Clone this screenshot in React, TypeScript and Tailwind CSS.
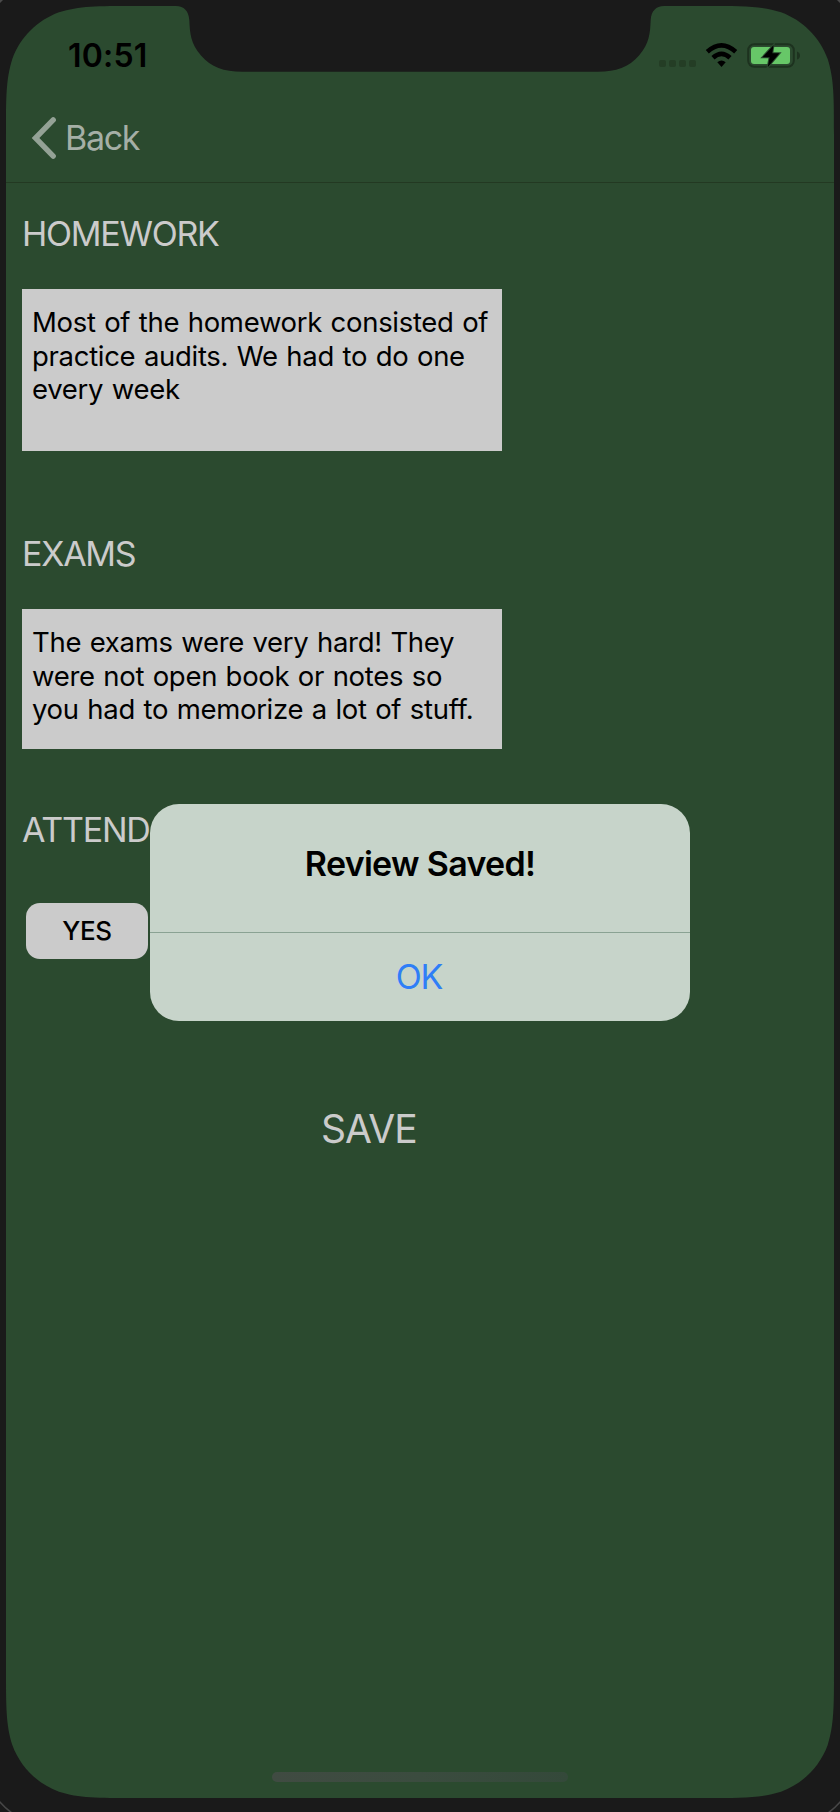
import React from "react";

function Bezel() {
  return (
    <svg className="pointer-events-none absolute inset-0" width="840" height="1812" viewBox="0 0 840 1812" aria-hidden="true">
      <path
        fill="#1a1a1a"
        fillRule="evenodd"
        d="M0 0H840V1812H0Z M134.400 6H176C184 6 188.700 11 189.300 20 C190 34 190.500 43 201 55.500 C211 67 224 71.800 242 71.800 H598 C616 71.800 629 67 639 55.500 C649.500 43 650 34 650.700 20 C651.300 11 656 6 664 6 H705.600 C742.600 6 761.100 6 781 12.300 C802.700 20.200 819.800 37.300 827.700 59 C834 78.900 834 97.400 834 134.400 V1669.600 C834 1706.600 834 1725.100 827.700 1745 C819.800 1766.700 802.700 1783.800 781 1791.700 C761.100 1798 742.600 1798 705.600 1798 H134.400 C97.400 1798 78.900 1798 59 1791.700 C37.300 1783.800 20.200 1766.700 12.300 1745 C6 1725.100 6 1706.600 6 1669.600 V134.400 C6 97.400 6 78.900 12.300 59 C20.200 37.300 37.300 20.200 59 12.300 C78.900 6 97.400 6 134.400 6Z"
      />
      <path d="M0 0H3L0 3Z M840 0H837L840 3Z" fill="#4a4a4a" />
      <path d="M-1 1801Q5 1808 12 1813 M841 1801Q835 1808 828 1813" fill="none" stroke="#474747" strokeWidth="1.6" />
    </svg>
  );
}

function StatusBar() {
  return (
    <div className="flex h-[92px] items-start justify-between pr-[33px] pl-[62px]">
      <span className="mt-[30px] text-[32px] leading-[40px] font-semibold tracking-[0.2px] text-black">10:51</span>
      <svg className="mt-[34px]" width="142" height="30" viewBox="0 0 142 30" aria-hidden="true">
        <g fill="#243d25">
          <rect x="0" y="20" width="7" height="7" rx="2" />
          <rect x="10" y="20" width="7" height="7" rx="2" />
          <rect x="20" y="20" width="7" height="7" rx="2" />
          <rect x="30" y="20" width="7" height="7" rx="2" />
        </g>
        <g fill="none" stroke="#000" strokeWidth="4.6">
          <path d="M48.300 11.700Q62.500 -1 76.700 11.700" />
          <path d="M54 17.800Q62.500 10 71 17.800" />
        </g>
        <path d="M58.300 22.300Q62.500 18.700 66.700 22.300L62.500 27Z" />
        <rect x="89.200" y="4.200" width="45.600" height="22.600" rx="6" fill="none" stroke="#1d321f" strokeWidth="2" />
        <path d="M138 11.500Q141 12.500 141 15.500Q141 18.500 138 19.500Z" fill="#1d321f" />
        <rect x="92" y="7" width="39" height="17" rx="3" fill="#67c768" />
        <path d="M114.500 5.200L103.500 17.300H110.600L108.700 27.200L120.500 13.200H113.300Z" fill="#000" stroke="#2b4a2f" strokeWidth="2" paintOrder="stroke" />
      </svg>
    </div>
  );
}

function NavBar() {
  return (
    <header className="h-[85px] border-b border-[#233922] pl-[25px]">
      <button className="mt-[18px] flex h-[43px] items-center">
        <svg width="26" height="42" viewBox="0 0 26 42" fill="none" stroke="#94a296" strokeWidth="5.400" strokeLinecap="round" strokeLinejoin="miter" aria-hidden="true">
          <path d="M22.200 2.900L4.500 21L22.200 39.100" />
        </svg>
        <span className="ml-[8px] text-[34px] leading-[40px] tracking-[-1.350px] text-[#a5afa6]">Back</span>
      </button>
    </header>
  );
}

function Label({ children }: { children: React.ReactNode }) {
  return <h2 className="text-[34px] leading-[40px] tracking-[-1.250px] text-[#cbcbcb]">{children}</h2>;
}

function Note({ lines, className }: { lines: string[]; className: string }) {
  return (
    <div className={"mt-[35px] w-[480px] bg-[#cbcbcb] pt-[17px] pl-[10px] text-[27.500px] leading-[33.500px] tracking-[-0.300px] [word-spacing:1.100px] whitespace-nowrap text-black " + className}>
      {lines.map((line) => (
        <p key={line}>{line}</p>
      ))}
    </div>
  );
}

function Alert() {
  return (
    <div role="dialog" className="absolute top-[804px] left-[150px] h-[217px] w-[540px] rounded-[29px] bg-[#c7d4ca] text-center">
      <div className="h-[129px] border-b border-[#8aa293] pt-[40px] text-[34px] leading-[40px] font-semibold tracking-[-0.7px] text-black">
        Review Saved!
      </div>
      <button className="mt-[24px] pr-[2px] text-[34px] leading-[40px] tracking-[-1.2px] text-[#2f7ef7]">OK</button>
    </div>
  );
}

export default function App() {
  return (
    <div className="relative h-[1812px] w-[840px] overflow-hidden bg-[#1a1a1a] p-[6px] font-[Inter,sans-serif]">
      <div className="flex h-[1792px] flex-col bg-[#2b4a2f]">
        <StatusBar />
        <NavBar />
        <main className="flex grow flex-col items-start pt-[31px] pl-[16px]">
          <Label>HOMEWORK</Label>
          <Note className="h-[162px]" lines={["Most of the homework consisted of", "practice audits. We had to do one", "every week"]} />
          <div className="mt-[83px]">
            <Label>EXAMS</Label>
            <Note className="h-[140px]" lines={["The exams were very hard! They", "were not open book or notes so", "you had to memorize a lot of stuff."]} />
          </div>
          <div className="mt-[61px]">
            <Label>ATTEND</Label>
          </div>
          <button className="mt-[53px] ml-[4px] h-[56px] w-[122px] rounded-[14px] bg-[#cbcbcb] pb-[2px] text-[26px] font-medium tracking-[-0.3px] text-black">YES</button>
          <button className="mt-[146px] ml-[299px] text-[39px] leading-[48px] tracking-[-1px] text-[#cbcbcb]">SAVE</button>
        </main>
        <div className="mb-[16px] h-[10px] w-[296px] self-center rounded-full bg-linear-to-r from-[#404b42] via-[#3b4c3f] to-[#34493a]" />
      </div>
      <Bezel />
      <Alert />
    </div>
  );
}
